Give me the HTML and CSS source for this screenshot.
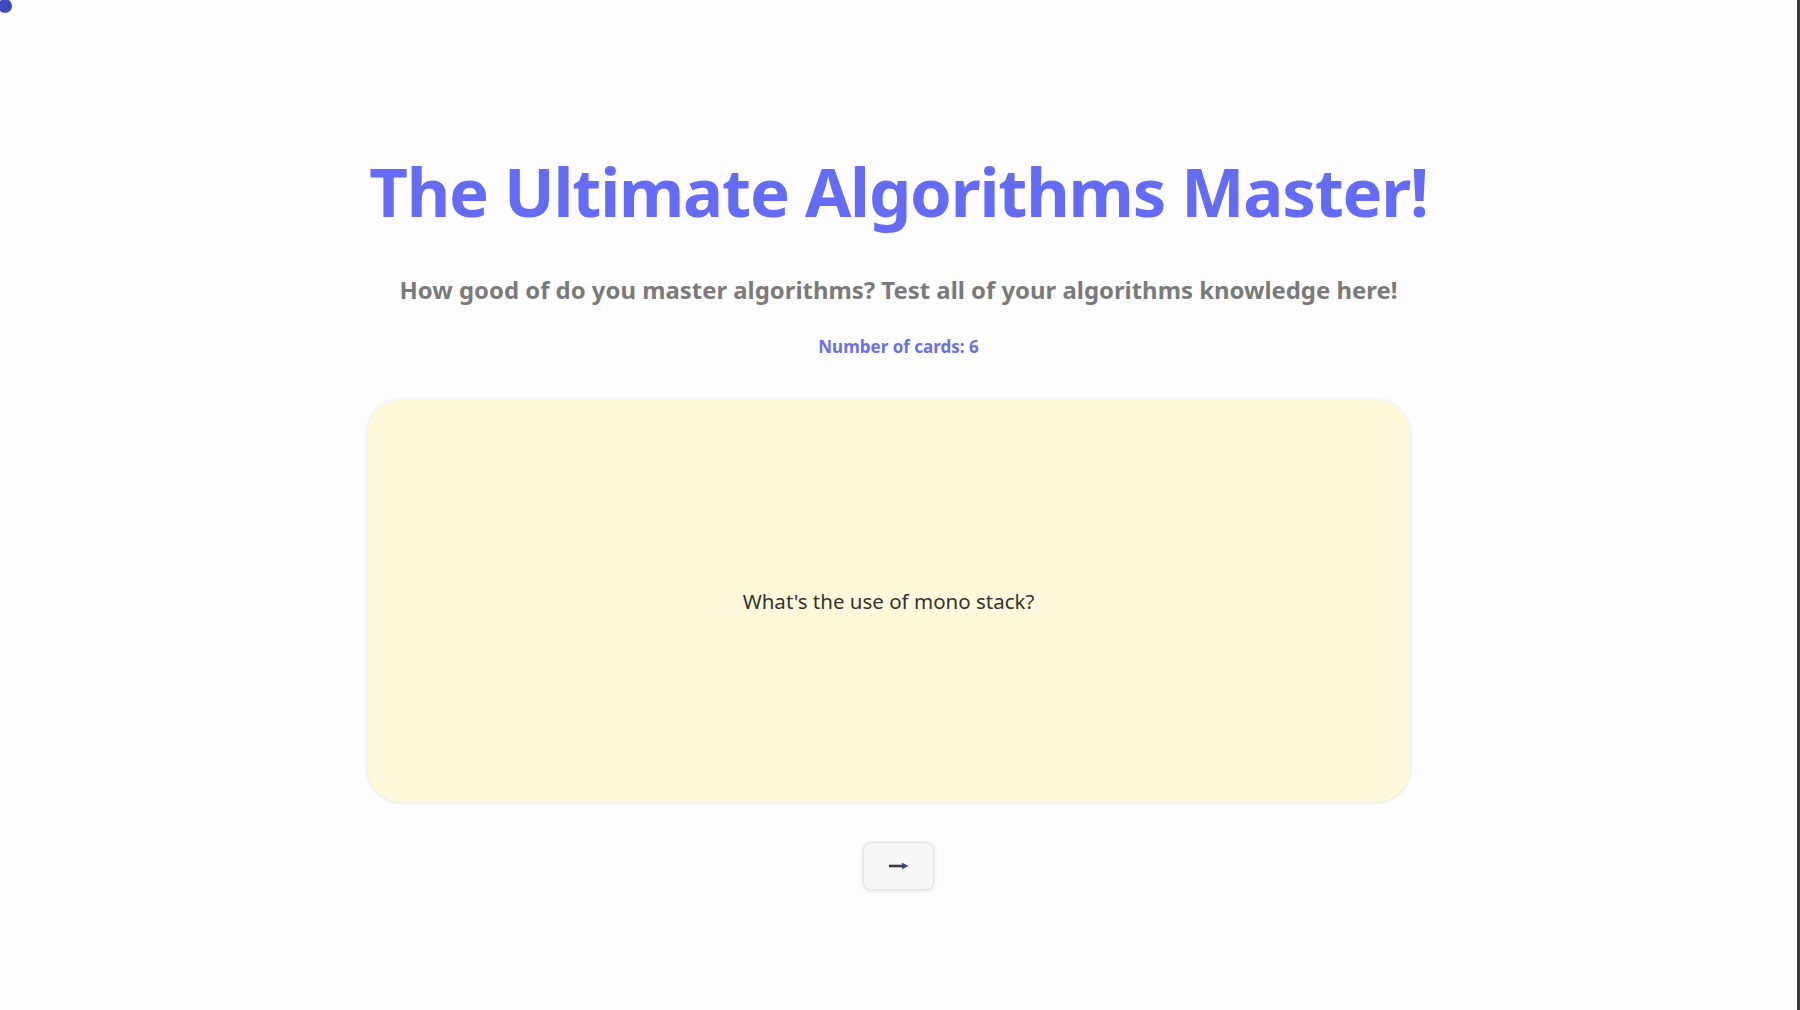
FILE: index.html
```html
<!DOCTYPE html>
<html lang="en">
<head>
<meta charset="utf-8">
<title>The Ultimate Algorithms Master!</title>
<link rel="stylesheet" href="styles.css">
</head>
<body>
<div class="dot"></div>
<main class="app">
  <h1 class="title">The Ultimate Algorithms Master!</h1>
  <p class="subtitle">How good of do you master algorithms? Test all of your algorithms knowledge here!</p>
  <p class="count">Number of cards: 6</p>
  <div class="card">
    <p class="question">What's the use of mono stack?</p>
  </div>
  <button class="next" type="button" aria-label="Next card">
    <svg class="arrow" width="20" height="8" viewBox="0 0 20 8" aria-hidden="true">
      <path d="M0 4 H14" stroke="#3a3a3a" stroke-width="2.6"/>
      <path d="M13 0.8 L19.5 4 L13 7.2 Z" fill="#3a3f8f"/>
    </svg>
  </button>
</main>
</body>
</html>
```
FILE: styles.css
```css
html, body {
  margin: 0;
  padding: 0;
}
body {
  min-height: 100vh;
  background: #fdfdfd;
  font-family: "Noto Sans", "Open Sans", sans-serif;
  border-right: 3px solid #3a3a3a;
  box-sizing: border-box;
  position: relative;
  overflow: hidden;
}
.dot {
  position: absolute;
  left: -2px;
  top: -1px;
  width: 14px;
  height: 14px;
  border-radius: 50%;
  background: #3b4bbf;
}
.app {
  display: flex;
  flex-direction: column;
  align-items: center;
  padding-top: 147px;
}
.title {
  margin: 0;
  font-size: 67px;
  line-height: 88px;
  font-weight: 700;
  letter-spacing: -1.2px;
  color: #646cf5;
  white-space: nowrap;
}
.subtitle {
  margin: 39px 0 0;
  font-size: 23.9px;
  line-height: 32px;
  font-weight: 700;
  color: #7a7a7a;
}
.count {
  margin: 29px 0 0;
  font-size: 17px;
  line-height: 24px;
  font-weight: 700;
  color: #6a70ea;
}
.card {
  margin: 41px 0 0 -20px;
  width: 1043px;
  height: 402px;
  box-sizing: border-box;
  background: #fefad9;
  border-radius: 34px;
  box-shadow: 0 0 4px rgba(0,0,0,0.08), 0 1px 3px rgba(0,0,0,0.06);
  display: flex;
  align-items: center;
  justify-content: center;
}
.question {
  margin: 0;
  font-size: 20.5px;
  color: #333;
}
.next {
  margin-top: 40px;
  width: 71px;
  height: 48px;
  background: #f7f7f7;
  border: 1px solid #e2e2e2;
  border-radius: 8px;
  box-shadow: 0 1px 4px rgba(0,0,0,0.12);
  display: flex;
  align-items: center;
  justify-content: center;
  padding: 0;
  cursor: pointer;
}
.arrow {
  display: block;
}
```
